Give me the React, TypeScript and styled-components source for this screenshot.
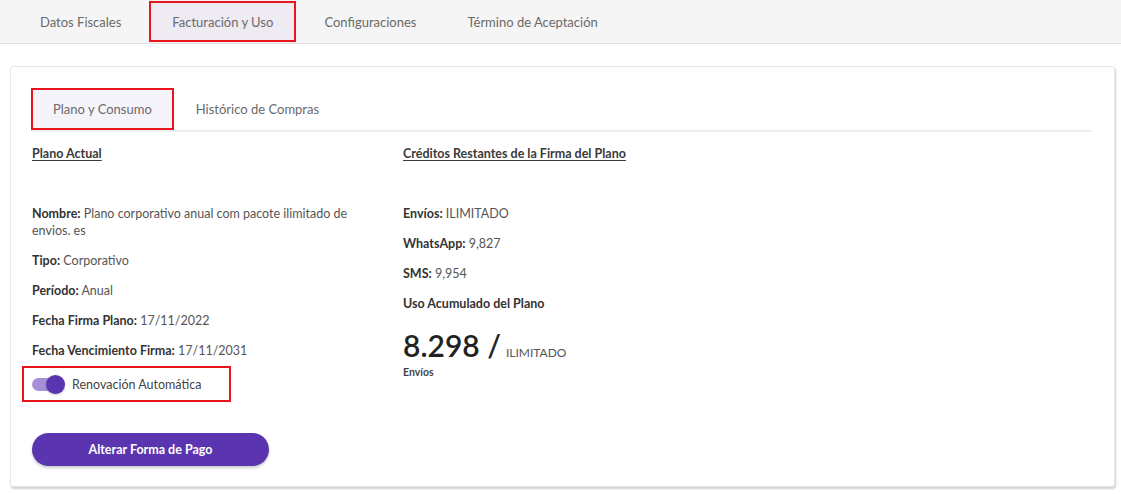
import React, { useState } from "react"
import styled, { createGlobalStyle } from "styled-components"

const GlobalStyle = createGlobalStyle`
  html, body {
    margin: 0;
    padding: 0;
    background: #ffffff;
    font-family: "Lato", "Open Sans", sans-serif;
    color: #444;
  }
  * {
    box-sizing: border-box;
  }
`

const mainTabs = ["Datos Fiscales", "Facturación y Uso", "Configuraciones", "Término de Aceptación"]
const subTabs = ["Plano y Consumo", "Histórico de Compras"]

const planRows = [
  { label: "Nombre:", value: "Plano corporativo anual com pacote ilimitado de envios. es" },
  { label: "Tipo:", value: "Corporativo" },
  { label: "Período:", value: "Anual" },
  { label: "Fecha Firma Plano:", value: "17/11/2022" },
  { label: "Fecha Vencimiento Firma:", value: "17/11/2031" },
]

const creditRows = [
  { label: "Envíos:", value: "ILIMITADO" },
  { label: "WhatsApp:", value: "9,827" },
  { label: "SMS:", value: "9,954" },
]

export default function App() {
  const [tab, setTab] = useState(1)
  const [subTab, setSubTab] = useState(0)
  const [renew, setRenew] = useState(true)

  return (
    <>
      <GlobalStyle />
      <Page>
        <TopBar>
          {mainTabs.map((t, i) => (
            <TopTab key={t} active={i === tab} onClick={() => setTab(i)}>
              {t}
            </TopTab>
          ))}
        </TopBar>

        <Card>
          <SubTabs>
            {subTabs.map((t, i) => (
              <SubTab key={t} active={i === subTab} onClick={() => setSubTab(i)}>
                {t}
              </SubTab>
            ))}
          </SubTabs>

          <Columns>
            <Column>
              <Heading>Plano Actual</Heading>
              <Rows>
                {planRows.map((r) => (
                  <Row key={r.label}>
                    <b>{r.label}</b> {r.value}
                  </Row>
                ))}
              </Rows>
              <ToggleBox onClick={() => setRenew(!renew)}>
                <Track on={renew}>
                  <Thumb on={renew} />
                </Track>
                <ToggleLabel>Renovación Automática</ToggleLabel>
              </ToggleBox>
              <PayButton>Alterar Forma de Pago</PayButton>
            </Column>

            <Column>
              <Heading>Créditos Restantes de la Firma del Plano</Heading>
              <Rows>
                {creditRows.map((r) => (
                  <Row key={r.label}>
                    <b>{r.label}</b> {r.value}
                  </Row>
                ))}
                <Row>
                  <b>Uso Acumulado del Plano</b>
                </Row>
              </Rows>
              <Usage>
                <BigNumber>8.298 /</BigNumber>
                <Limit>ILIMITADO</Limit>
              </Usage>
              <UsageCaption>Envíos</UsageCaption>
            </Column>
          </Columns>
        </Card>
      </Page>
    </>
  )
}

const Page = styled.div`
  width: 1121px;
  height: 494px;
  overflow: hidden;
`

const TopBar = styled.div`
  display: flex;
  gap: 5px;
  height: 44px;
  padding: 1px 0 0 17px;
  background: #f5f5f5;
  border-bottom: 1px solid #dedede;
`

const TopTab = styled.div<{ active?: boolean }>`
  display: flex;
  align-items: center;
  height: 41px;
  padding: 0 21px;
  font-size: 13px;
  color: #6a6a6a;
  border: 2px solid ${(p) => (p.active ? "#e8141e" : "transparent")};
  background: ${(p) => (p.active ? "#eeebf3" : "transparent")};
  cursor: pointer;
`

const Card = styled.div`
  margin: 22px 6px 0 10px;
  height: 421px;
  padding: 21px 22px 0 20px;
  border: 1px solid #e6e6e6;
  border-radius: 3px;
  box-shadow: 1px 2px 2px rgba(0, 0, 0, 0.18);
  background: #fff;
`

const SubTabs = styled.div`
  display: flex;
  border-bottom: 2px solid #eeeeee;
`

const SubTab = styled.div<{ active?: boolean }>`
  display: flex;
  align-items: center;
  height: 42px;
  padding: 0 20px;
  font-size: 13px;
  color: #6a6a6a;
  border: 2px solid ${(p) => (p.active ? "#e8141e" : "transparent")};
  background: ${(p) => (p.active ? "#f6f4fb" : "transparent")};
  cursor: pointer;
`

const Columns = styled.div`
  display: grid;
  grid-template-columns: 340px 1fr;
  column-gap: 31px;
  padding-left: 1px;
`

const Column = styled.div`
  display: flex;
  flex-direction: column;
  align-items: flex-start;
`

const Heading = styled.div`
  margin-top: 14px;
  font-size: 12.5px;
  font-weight: 700;
  color: #3a3a3a;
  text-decoration: underline;
  text-underline-offset: 2px;
`

const Rows = styled.div`
  display: flex;
  flex-direction: column;
  gap: 13px;
  margin-top: 44px;
`

const Row = styled.div`
  font-size: 12.5px;
  line-height: 17px;
  color: #555;

  b {
    font-weight: 700;
    color: #333;
  }
`

const ToggleBox = styled.div`
  display: flex;
  align-items: center;
  gap: 8px;
  margin: 7px 0 0 -10px;
  width: 209px;
  height: 36px;
  padding-left: 8px;
  border: 2px solid #e8141e;
  cursor: pointer;
`

const Track = styled.div<{ on: boolean }>`
  position: relative;
  width: 32px;
  height: 13px;
  border-radius: 7px;
  background: ${(p) => (p.on ? "#a48fd8" : "#cfcfcf")};
`

const Thumb = styled.div<{ on: boolean }>`
  position: absolute;
  top: -3px;
  left: ${(p) => (p.on ? "14px" : "0")};
  width: 19px;
  height: 19px;
  border-radius: 50%;
  background: ${(p) => (p.on ? "#5a35b0" : "#f2f2f2")};
  box-shadow: 0 1px 2px rgba(0, 0, 0, 0.25);
`

const ToggleLabel = styled.span`
  font-size: 12.5px;
  color: #444;
`

const PayButton = styled.button`
  margin-top: 31px;
  width: 237px;
  height: 33px;
  border: none;
  border-radius: 17px;
  background: #5b35b0;
  color: #fff;
  font-family: inherit;
  font-size: 12.5px;
  font-weight: 700;
  box-shadow: 0 2px 3px rgba(0, 0, 0, 0.2);
  cursor: pointer;
`

const Usage = styled.div`
  display: flex;
  align-items: baseline;
  gap: 5px;
  margin-top: 15px;
`

const BigNumber = styled.span`
  font-size: 30px;
  font-weight: 600;
  color: #222;
`

const Limit = styled.span`
  font-size: 12px;
  color: #555;
`

const UsageCaption = styled.div`
  margin-top: 3px;
  font-size: 10.5px;
  font-weight: 700;
  color: #444;
`
